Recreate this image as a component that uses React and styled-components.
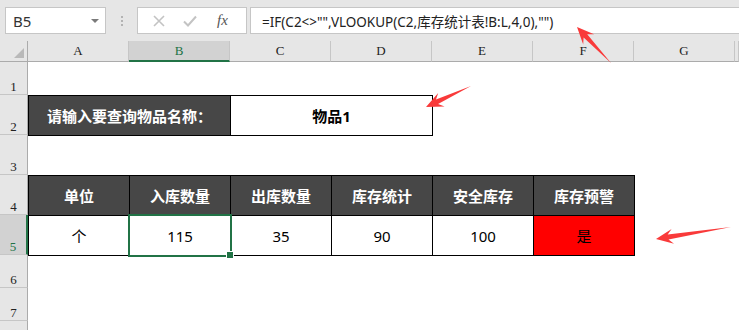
import React from 'react';
import styled, { createGlobalStyle, css } from 'styled-components';

const GlobalStyle = createGlobalStyle`
  html, body { margin: 0; padding: 0; background: #fff; }
  body { font-family: "Noto Sans", "Noto Sans CJK SC", sans-serif; }
  * { box-sizing: border-box; }
`;

const GREEN = '#217346';

const Page = styled.div`
  position: relative;
  width: 739px;
  height: 330px;
  overflow: hidden;
  background: #fff;
`;

const TopBar = styled.div`
  height: 41px;
  background: #e6e6e6;
  display: flex;
  align-items: flex-start;
  padding: 7px 0 0 5px;
`;

const Box = styled.div`
  height: 27px;
  background: #fff;
  border: 1px solid #c6c6c6;
  display: flex;
  align-items: center;
`;

const NameBox = styled(Box)`
  width: 101px;
  justify-content: space-between;
  padding: 0 6px 0 7px;
  font-size: 15px;
  color: #333;
`;

const Caret = styled.span`
  width: 0;
  height: 0;
  border-left: 4px solid transparent;
  border-right: 4px solid transparent;
  border-top: 4px solid #7a7a7a;
`;

const Grip = styled.div`
  width: 31px;
  height: 27px;
  display: flex;
  flex-direction: column;
  align-items: center;
  justify-content: center;
  gap: 2px;
  span {
    width: 2px;
    height: 2px;
    background: #b3b3b3;
  }
`;

const Buttons = styled(Box)`
  width: 110px;
  padding-left: 15px;
  gap: 18px;
`;

const Fx = styled.i`
  font-family: "Liberation Serif", serif;
  font-size: 15px;
  color: #555;
  margin-left: 2px;
`;

const FormulaBox = styled(Box)`
  flex: 1;
  margin-left: 3px;
  margin-right: -10px;
  padding-left: 11px;
  font-size: 13.5px;
  color: #222;
  white-space: nowrap;
`;

const Sheet = styled.div`
  display: grid;
  grid-template-columns: 28px repeat(7, 101px) 1fr;
  grid-template-rows: 21px 33px 40px 40px 40px 40px 33px 33px 33px;
`;

const Corner = styled.div`
  grid-column: 1;
  grid-row: 1;
  position: relative;
  background: #e6e6e6;
  border-right: 1px solid #ababab;
  border-bottom: 1px solid #ababab;
  &::after {
    content: '';
    position: absolute;
    right: 3px;
    bottom: 3px;
    border-left: 10px solid transparent;
    border-bottom: 10px solid #b9b9b9;
  }
`;

const headerFont = css`
  font-family: "Liberation Serif", "DejaVu Serif", serif;
  font-size: 13px;
  color: ${p => (p.$active ? GREEN : '#222')};
  background: ${p => (p.$active ? '#d2d2d2' : '#e6e6e6')};
`;

const ColHeader = styled.div`
  ${headerFont};
  grid-column: ${p => p.$col};
  grid-row: 1;
  display: flex;
  align-items: center;
  justify-content: center;
  border-right: 1px solid #c6c6c6;
  border-bottom: ${p => (p.$active ? `2px solid ${GREEN}` : '1px solid #ababab')};
  padding-top: ${p => (p.$active ? '1px' : '0')};
`;

const RowHeader = styled.div`
  ${headerFont};
  grid-column: 1;
  grid-row: ${p => p.$row + 1};
  display: flex;
  align-items: flex-end;
  justify-content: center;
  line-height: 14px;
  border-bottom: 1px solid #c6c6c6;
  border-right: ${p => (p.$active ? `2px solid ${GREEN}` : '1px solid #ababab')};
`;

const variants = {
  dark: css`
    background: #474747;
    color: #fff;
    font-weight: bold;
  `,
  plain: css`
    background: #fff;
    color: #000;
  `,
  alert: css`
    background: #ff0000;
    color: #000;
  `,
};

const Cell = styled.div`
  grid-column: ${p => p.$col + 1} / span ${p => p.$span || 1};
  grid-row: ${p => p.$row + 1};
  margin: 0 -1px -1px 0;
  border: 1px solid #000;
  display: flex;
  align-items: center;
  justify-content: center;
  font-size: 15px;
  font-family: "Noto Sans", "Noto Sans CJK SC", sans-serif;
  ${p => variants[p.$variant || 'plain']};
  ${p => p.$bold && 'font-weight: bold;'}
  ${p =>
    p.$selected &&
    css`
      position: relative;
      z-index: 2;
      border-color: ${GREEN};
      box-shadow: 0 0 0 1px ${GREEN};
      &::after {
        content: '';
        position: absolute;
        right: -4px;
        bottom: -4px;
        width: 6px;
        height: 6px;
        background: ${GREEN};
        border: 1px solid #fff;
      }
    `}
`;

const Overlay = styled.svg`
  position: absolute;
  left: 0;
  top: 0;
  pointer-events: none;
  z-index: 5;
`;

const columns = ['A', 'B', 'C', 'D', 'E', 'F', 'G', ''];
const headers = ['单位', '入库数量', '出库数量', '库存统计', '安全库存', '库存预警'];
const values = ['个', '115', '35', '90', '100', '是'];

// tail -> tip, swept-back head like a screenshot annotation arrow
function arrowPoints([x1, y1], [x2, y2], headLen, headW, neckW) {
  const len = Math.hypot(x2 - x1, y2 - y1);
  const ux = (x2 - x1) / len;
  const uy = (y2 - y1) / len;
  const nx = -uy;
  const ny = ux;
  const at = (d, w) => [x2 - ux * d + nx * w, y2 - uy * d + ny * w];
  const pts = [
    [x1, y1],
    at(headLen * 0.72, neckW / 2),
    at(headLen, headW / 2),
    [x2, y2],
    at(headLen, -headW / 2),
    at(headLen * 0.72, -neckW / 2),
  ];
  return pts.map(p => p.map(v => v.toFixed(1)).join(',')).join(' ');
}

const arrows = [
  { from: [611, 63], to: [577, 27] },
  { from: [471, 86], to: [426, 107] },
  { from: [731, 227], to: [656, 239] },
];

export default function App() {
  return (
    <Page>
      <GlobalStyle />
      <TopBar>
        <NameBox>
          B5
          <Caret />
        </NameBox>
        <Grip>
          <span />
          <span />
          <span />
        </Grip>
        <Buttons>
          <svg width="12" height="12" viewBox="0 0 12 12">
            <path d="M1 1L11 11M11 1L1 11" stroke="#c3c3c3" strokeWidth="1.6" />
          </svg>
          <svg width="14" height="12" viewBox="0 0 14 12">
            <path d="M1 6.5L5 10.5L13 1.5" stroke="#c3c3c3" strokeWidth="2" fill="none" />
          </svg>
          <Fx>fx</Fx>
        </Buttons>
        <FormulaBox>=IF(C2&lt;&gt;"",VLOOKUP(C2,库存统计表!B:L,4,0),"")</FormulaBox>
      </TopBar>

      <Sheet>
        <Corner />
        {columns.map((c, i) => (
          <ColHeader key={i} $col={i + 2} $active={c === 'B'}>
            {c}
          </ColHeader>
        ))}
        {[1, 2, 3, 4, 5, 6, 7, 8].map(r => (
          <RowHeader key={r} $row={r} $active={r === 5}>
            {r < 8 ? r : ''}
          </RowHeader>
        ))}

        <Cell $col={1} $row={2} $span={2} $variant="dark">
          请输入要查询物品名称：
        </Cell>
        <Cell $col={3} $row={2} $span={2} $bold>
          物品1
        </Cell>

        {headers.map((h, i) => (
          <Cell key={h} $col={i + 1} $row={4} $variant="dark">
            {h}
          </Cell>
        ))}
        {values.map((v, i) => (
          <Cell
            key={i}
            $col={i + 1}
            $row={5}
            $variant={i === 5 ? 'alert' : 'plain'}
            $selected={i === 1}
          >
            {v}
          </Cell>
        ))}
      </Sheet>

      <Overlay width="739" height="330">
        {arrows.map((a, i) => (
          <polygon key={i} points={arrowPoints(a.from, a.to, 17, 15, 5)} fill="#f93a3a" />
        ))}
      </Overlay>
    </Page>
  );
}
